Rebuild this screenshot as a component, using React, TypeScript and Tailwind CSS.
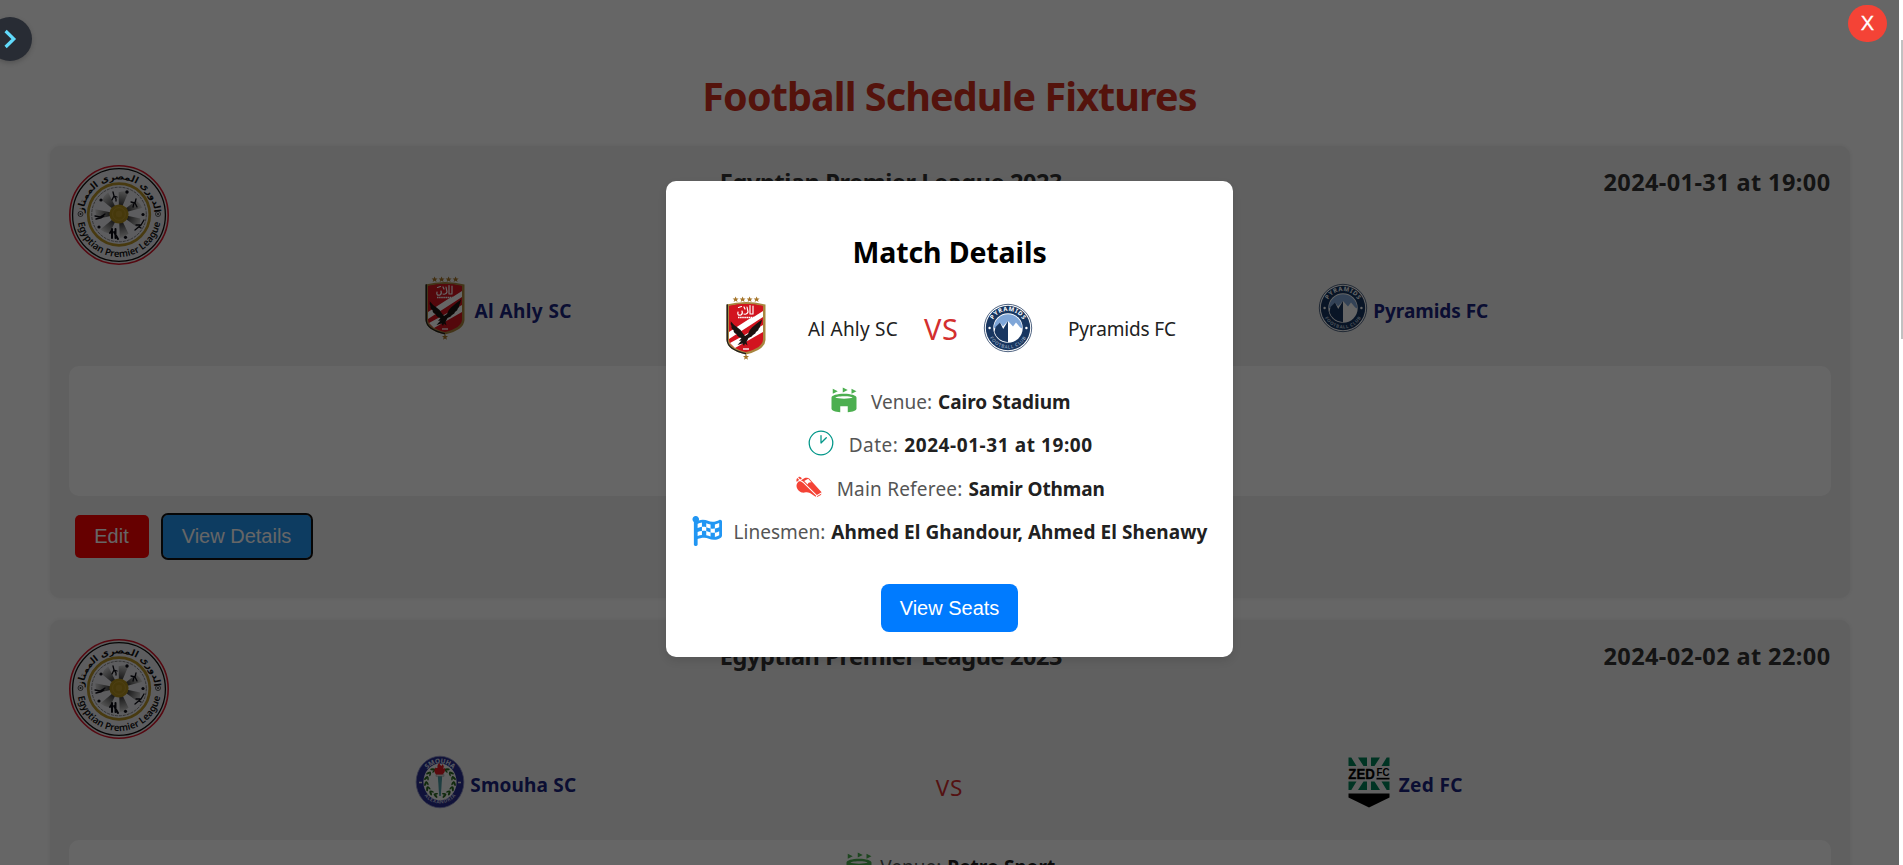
import type { ReactNode } from "react";
import { MdStadium } from "react-icons/md";
import { CiClock1 } from "react-icons/ci";
import { GiWhistle } from "react-icons/gi";
import { FaFlagCheckered } from "react-icons/fa";

function LeagueLogo({ id }: { id: string }) {
  const petals = [15, 67, 118, 170, 222, 273, 325];
  return (
    <svg viewBox="0 0 100 100" className="mr-[10px] size-[100px] shrink-0">
      <defs>
        <path id={`${id}-top`} d="M16.640 62.140A35.500 35.500 0 1 1 83.360 62.140" />
        <path id={`${id}-bottom`} d="M8 50a42 42 0 0 0 84 0" />
        <radialGradient id={`${id}-petal`} gradientUnits="userSpaceOnUse" cx="50" cy="49" r="25">
          <stop offset="0.3" stopColor="#333" />
          <stop offset="1" stopColor="#dedede" />
        </radialGradient>
      </defs>
      <circle cx="50" cy="50" r="49.2" fill="#e6e6e6" stroke="#d4142a" strokeWidth="1.6" />
      <circle cx="50" cy="50" r="46.4" fill="#e9e9ee" stroke="#111" strokeWidth="1.3" />
      <circle cx="50" cy="49.5" r="30.8" fill="#e9e9ee" stroke="#b4922a" strokeWidth="2.7" />
      <circle cx="50" cy="49.5" r="27.3" fill="none" stroke="#555" strokeWidth="0.7" strokeDasharray="3 1" />
      {petals.map((a) => (
        <path key={a} d="M50 49 44 28q5-3 9.500-3Z" fill={`url(#${id}-petal)`} transform={`rotate(${a} 50 49)`} />
      ))}
      <circle cx="50" cy="49" r="9.6" fill="#b08e1c" />
      <circle cx="50" cy="49" r="6.4" fill="none" stroke="#c4a238" strokeWidth="0.8" />
      <circle cx="50" cy="49" r="3.2" fill="#bb982c" />
      <g fill="#0c0c14">
        <circle cx="58" cy="27" r="1.7" />
        <circle cx="32" cy="35" r="1.6" />
        <circle cx="74" cy="49.5" r="1.6" />
        <circle cx="30" cy="62" r="1.6" />
        <circle cx="56.500" cy="72.300" r="1.6" />
      </g>
      <g fill="none" stroke="#0c0c14" strokeWidth="1.3" strokeLinecap="round">
        <path d="M44 27l1 4 3 1M45 31l-2 4M45 31l2 3 0 2M67 34l-1 4-4-1M66 38l2 4M65 38l-1 4M26 51l5 1 5-3M27 54l5-1 3-2M75 55l-3 5-6 5M71 60l-4 0M70 62l2 1" />
        <path d="M43 64v9M46.500 64v9M45 67l4 7M41 68l2-3" strokeWidth="2" />
      </g>
      <g fill="#e9e9ee" stroke="#333" strokeWidth="0.8">
        <circle cx="11.500" cy="49" r="2.500" />
        <circle cx="89" cy="49" r="2.500" />
      </g>
      <g fill="#333">
        <circle cx="11.500" cy="49" r="1" />
        <circle cx="89" cy="49" r="1" />
      </g>
      <text className="font-['DejaVu_Sans',sans-serif] text-[9.300px]" fill="#111" textAnchor="middle">
        <textPath href={`#${id}-top`} startOffset="50%">الدورى المصرى الممتاز</textPath>
      </text>
      <text className="font-['Noto_Sans',sans-serif] text-[9.500px] font-semibold" fill="#111" textAnchor="middle">
        <textPath href={`#${id}-bottom`} startOffset="50%">Egyptian Premier League</textPath>
      </text>
    </svg>
  );
}

const STAR = "M0-3 .9-.9 3-.9 1.300.5 2 2.700 0 1.400-2 2.700-1.300.5-3-.9-.9-.9Z";

function AhlyCrest() {
  return (
    <svg viewBox="0 0 50 64" className="h-16 w-[50px] shrink-0">
      <g fill="#a5752a">
        {[14.600, 21.600, 28.600, 35.600].map((x) => (
          <path key={x} d={STAR} transform={`translate(${x} 3.400)`} />
        ))}
        <path d={STAR} transform="translate(25 61)" />
      </g>
      <path d="M5.500 8.500Q25 3.500 44.500 8.500V44Q44 54 25 58.500 6 54 5.500 44Z" fill="#a8863f" />
      <path d="M5.500 8.500 7 8.200V45Q8 53 25 57v1.500Q6 54 5.500 44Z" fill="#222" />
      <path d="M8 10Q25 6 42 10V43.500Q41.500 52 25 56 8.500 52 8 43.500Z" fill="#d2141f" />
      <path d="M8 36 42 14V21L8 43ZM9 47 42 29V36L14 52Z" fill="#fff" />
      <path d="M8 10Q25 6 42 10V15L31 22 8 24Z" fill="#d2141f" />
      <g fill="none" stroke="#fff" strokeLinecap="round">
        <path d="M17 16q-1 4 3 3 2-1 1-4M23 18q3 1 4-2l-1-5M29 9.500v8M32 10v7.500M17.500 11.500l3-1M23 11l1 2M29 18h3" strokeWidth="1.2" />
        <path d="M17 21.500h16" strokeWidth="1.500" strokeDasharray="1.600 .5" strokeLinecap="butt" />
      </g>
      <path
        d="M9.500 25q3 4 7 6.500 4 2.500 5.500 6l2 2.500 3-2q1-4 4-6.500Q36 27 41 23.500q-.5 4-2 6 1 .5-1.500 3.500.5 1-2.500 3 0 1.500-3 3-1 2-4.500 3l-2 4 1 3.500-2.500-2-1 2.500-1.500-2.500-5 1.500 4-4.500-2.500.5 2.500-3q-4-1-5-4-3-1-3-4-2.500-1-2-4-1.500-2-.5-5Z"
        fill="#1b1210"
      />
      <path d="M22 53h6" stroke="#fff" strokeWidth="1.300" />
    </svg>
  );
}

function PyramidsCrest({ id }: { id: string }) {
  return (
    <svg viewBox="0 0 50 50" className="size-[50px] shrink-0">
      <defs>
        <path id={`${id}-t`} d="M8 25a17 17 0 0 1 34 0" />
        <path id={`${id}-b`} d="M4.500 25a20.500 20.500 0 0 0 41 0" />
      </defs>
      <circle cx="25" cy="25" r="23.700" fill="#fff" stroke="#3d5474" strokeWidth="0.9" />
      <circle cx="25" cy="25" r="22.200" fill="#183660" />
      <circle cx="25" cy="25" r="14.700" fill="#fff" />
      <path d="M10.800 25.500a14.200 14.200 0 0 1 28.400 0l-2-1-4.200-5-3 4-5-5.500-5 5.500-3-4-4.200 5Z" fill="#7fa6d8" />
      <path d="M25 18v21.200A14.200 14.200 0 0 1 11.500 29l1-5 4.500-4.500 3.200 6.500Z" fill="#183660" />
      <circle cx="6.600" cy="25" r="1.200" fill="#fff" />
      <circle cx="43.400" cy="25" r="1.200" fill="#fff" />
      <text className="font-['Noto_Sans',sans-serif] text-[6px] font-bold" fill="#fff" textAnchor="middle">
        <textPath href={`#${id}-t`} startOffset="50%" textLength="36">PYRAMIDS</textPath>
      </text>
      <text className="font-['Noto_Sans',sans-serif] text-[4.500px]" fill="#b9c6d8" textAnchor="middle">
        <textPath href={`#${id}-b`} startOffset="50%" textLength="44">FOOTBALL CLUB</textPath>
      </text>
    </svg>
  );
}

function SmouhaCrest() {
  const leaves = [20, 42, 64, 86, 108, 130, 152];
  return (
    <svg viewBox="0 0 50 54" className="h-[54px] w-[50px] shrink-0">
      <defs>
        <path id="smouha-t" d="M7.500 27a17.500 18.800 0 0 1 35 0" />
        <path id="smouha-b" d="M4.500 27a20.500 21.500 0 0 0 41 0" />
      </defs>
      <ellipse cx="25" cy="27" rx="23.900" ry="25.800" fill="#2a2f8e" stroke="#8b8fc0" strokeWidth="0.8" />
      <ellipse cx="25" cy="27" rx="16.600" ry="18.400" fill="#f4f4f4" />
      {leaves.map((a) => (
        <g key={a} fill="#2c6a22">
          <ellipse cx="25" cy="12.500" rx="1.100" ry="2.600" transform={`rotate(${a + 10} 25 27) rotate(60 25 12.500)`} />
          <ellipse cx="25" cy="14.500" rx="0.800" ry="2" transform={`rotate(${a + 10} 25 27) rotate(110 25 14.500)`} />
          <ellipse cx="25" cy="12.500" rx="1.100" ry="2.600" transform={`rotate(${-a - 10} 25 27) rotate(-60 25 12.500)`} />
          <ellipse cx="25" cy="14.500" rx="0.800" ry="2" transform={`rotate(${-a - 10} 25 27) rotate(-110 25 14.500)`} />
        </g>
      ))}
      <path d="M22.800 21h4.400L25.800 41h-1.600Z" fill="#4d9aa0" />
      <path d="M21 19.500h8v1.800h-8Z" fill="#ddd" stroke="#666" strokeWidth="0.3" />
      <path d="M21 19.500q-3-3.500-.5-7 1.500 1 2 0-.5-3 2-4.500 0 2 2 3 1-1 .5-2 3 2 1 4.500 1.500 0 2-.5.500 4-2.500 6.500Z" fill="#e01a24" />
      <path d="M4 27.500h3M43 27.500h3" stroke="#ddd" strokeWidth="1.500" />
      <text className="font-['Noto_Sans',sans-serif] text-[6.500px] font-bold" fill="#dfe0f0" textAnchor="middle">
        <textPath href="#smouha-t" startOffset="50%" textLength="29">SMOUHA</textPath>
      </text>
      <text className="font-['Noto_Sans',sans-serif] text-[5px]" fill="#b9bbdd" textAnchor="middle">
        <textPath href="#smouha-b" startOffset="50%" textLength="36">ALEXANDRIA</textPath>
      </text>
    </svg>
  );
}

function ZedCrest() {
  return (
    <svg viewBox="0 0 50 54" className="h-[54px] w-[50px] shrink-0">
      <g fill="#008359">
        <path d="M4.500 2.500h2.800L12.500 11H4.500ZM14 2.500h9V11h-3.500ZM27 2.500h9L30.500 11H27ZM42.700 2.500h2.800V11h-8Z" />
        <path d="M4.500 26.500h8L7.300 35H4.500ZM19.500 26.500H23V35h-9ZM27 26.500h3.500L36 35h-9ZM37.500 26.500h8V35h-2.800Z" />
      </g>
      <path d="M4.500 38.500h41v4L25 52.500 4.500 42.500Z" fill="#000" />
      <text x="4.300" y="24.300" textLength="26.500" lengthAdjust="spacingAndGlyphs" className="font-['Liberation_Sans',sans-serif] text-[15px] font-bold" fill="#000" stroke="#000" strokeWidth="0.3">ZED</text>
      <text x="32.500" y="21.300" textLength="13" lengthAdjust="spacingAndGlyphs" className="font-['Liberation_Sans',sans-serif] text-[11px] font-bold" fill="#000">FC</text>
      <path d="M32.500 22.800h13v1.700h-13Z" fill="#000" />
    </svg>
  );
}

type InfoRowProps = { icon: ReactNode; label: string; value: string; iconClass: string; labelClass: string; valueClass: string };

function InfoRow({ icon, label, value, iconClass, labelClass, valueClass }: InfoRowProps) {
  return (
    <div className="flex h-[43.6px] items-center justify-center text-[19px] whitespace-nowrap">
      <span className={`text-[30px] ${iconClass}`}>{icon}</span>
      <span className={`mr-[6px] pt-[2px] text-[#555] ${labelClass}`}>{label}</span>
      <span className={`pt-[2px] font-bold text-[#212121] ${valueClass}`}>{value}</span>
    </div>
  );
}

type Fixture = {
  id: string;
  date: string;
  home: string;
  away: string;
  homeLogo: ReactNode;
  awayLogo: ReactNode;
  homeClass: string;
  awayClass: string;
  venue: string;
  focused: boolean;
};

const fixtures: Fixture[] = [
  {
    id: "ahly-pyramids",
    date: "2024-01-31 at 19:00",
    home: "Al Ahly SC",
    away: "Pyramids FC",
    homeLogo: <AhlyCrest />,
    awayLogo: <PyramidsCrest id="pyr-card" />,
    homeClass: "tracking-[0.4px]",
    awayClass: "tracking-[-0.04px]",
    venue: "Cairo Stadium",
    focused: true,
  },
  {
    id: "smouha-zed",
    date: "2024-02-02 at 22:00",
    home: "Smouha SC",
    away: "Zed FC",
    homeLogo: <SmouhaCrest />,
    awayLogo: <ZedCrest />,
    homeClass: "tracking-[0.16px]",
    awayClass: "tracking-[0.36px]",
    venue: "Petro Sport",
    focused: false,
  },
];

function FixtureCard({ f }: { f: Fixture }) {
  return (
    <section className="mb-[22.5px] h-[451.5px] shrink-0 rounded-[10px] bg-[#f0f0f0] p-[19px] shadow-[0_0_5px_rgba(0,0,0,0.08)]">
      <header className="flex items-start justify-between text-[23.5px] leading-[33px] font-bold text-[#333]">
        <LeagueLogo id={f.id} />
        <h2 className="pt-px tracking-[-0.4px]">Egyptian Premier League 2023</h2>
        <time className="pt-px tracking-[0.4px]">{f.date}</time>
      </header>
      <div className="mb-[15px] grid h-[86px] grid-cols-[1fr_53px_1fr] items-center text-[19px] font-bold text-[#1a237e]">
        <div className="flex items-center justify-center gap-[5px]">
          {f.homeLogo}
          <span className={`pt-[6px] ${f.homeClass}`}>{f.home}</span>
        </div>
        <span className="mt-[11px] text-center text-[22.5px] font-normal tracking-[0.8px] text-[#d32f2f]">VS</span>
        <div className="flex items-center justify-center gap-[5px]">
          {f.awayLogo}
          <span className={`pt-[6px] ${f.awayClass}`}>{f.away}</span>
        </div>
      </div>
      <div className="mb-[19px] h-[130px] rounded-[10px] bg-white pt-[4px]">
        <InfoRow icon={<MdStadium className="text-[#4caf50]" />} label="Venue:" value={f.venue} iconClass="-mt-px mr-[6.5px]" labelClass="" valueClass="tracking-[0.05px]" />
      </div>
      <div className="flex gap-[14px] pl-[6px] font-['Liberation_Sans',Arial,sans-serif] text-[20px] leading-[23px] text-white">
        <button className="h-[43px] w-[74px] rounded-[5px] bg-[#ff0000]">Edit</button>
        <button className={f.focused ? "h-[43px] w-[148px] rounded-[5px] bg-[#2196f3] outline-2 outline-[#101010]" : "h-[43px] w-[148px] rounded-[5px] bg-[#2196f3]"}>View Details</button>
      </div>
    </section>
  );
}

function MatchModal() {
  return (
    <div className="flex h-[476px] w-[567px] flex-col items-center rounded-[10px] bg-white pt-[51px] shadow-[0_4px_8px_rgba(0,0,0,0.1)]">
      <h2 className="text-[28.5px] leading-10 font-bold tracking-[-0.11px] text-black">Match Details</h2>
      <div className="mt-6 flex h-16 w-full items-center pl-[55px] text-[19px] whitespace-nowrap text-[#212121]">
        <AhlyCrest />
        <span className="ml-[37px] w-[116px] pt-[2px] tracking-[0.2px]">Al Ahly SC</span>
        <span className="w-[59px] pt-px text-[29px] tracking-[0.6px] text-[#d32f2f]">VS</span>
        <PyramidsCrest id="pyr-modal" />
        <span className="ml-[35px] pt-[2px] tracking-[-0.16px]">Pyramids FC</span>
      </div>
      <div className="mt-[19px]">
        <InfoRow icon={<MdStadium className="text-[#4caf50]" />} label="Venue:" value="Cairo Stadium" iconClass="-mt-px mr-[12.5px]" labelClass="" valueClass="tracking-[-0.03px]" />
        <InfoRow icon={<CiClock1 className="text-[#009688]" />} label="Date:" value="2024-01-31 at 19:00" iconClass="-mt-[3px] mr-[12.5px]" labelClass="tracking-[0.45px]" valueClass="tracking-[0.58px]" />
        <InfoRow icon={<GiWhistle className="text-[#f44336]" />} label="Main Referee:" value="Samir Othman" iconClass="-mt-px mr-[12.5px]" labelClass="tracking-[0.2px]" valueClass="tracking-[-0.09px]" />
        <InfoRow icon={<FaFlagCheckered className="text-[#2196f3]" />} label="Linesmen:" value="Ahmed El Ghandour, Ahmed El Shenawy" iconClass="-mt-px mr-[12px]" labelClass="" valueClass="tracking-[0.06px]" />
      </div>
      <button className="mt-[31px] h-12 w-[137px] rounded-[8px] bg-[#007bff] pb-px font-['Liberation_Sans',Arial,sans-serif] text-[20px] text-white">View Seats</button>
    </div>
  );
}

export default function App() {
  return (
    <div className="relative flex h-[865px] w-full overflow-hidden bg-white font-['Noto_Sans','Open_Sans',sans-serif]">
      <main className="flex h-full flex-1 flex-col overflow-hidden px-[49.5px] pt-[66px]">
        <h1 className="mb-5 text-center text-[39.5px] leading-[60px] font-bold tracking-[-0.9px] text-[#d3301f]">Football Schedule Fixtures</h1>
        {fixtures.map((f) => (
          <FixtureCard key={f.id} f={f} />
        ))}
      </main>
      <div className="h-full w-[4px] shrink-0 bg-white pt-10 pl-[2px]">
        <div className="h-[299px] bg-[#c1c1c1]" />
      </div>

      <div className="absolute inset-y-0 right-[4px] left-0 flex items-start justify-center bg-black/60 pt-[181px]">
        <MatchModal />
        <button className="absolute top-[5px] right-[12px] h-[37px] w-[39px] rounded-full bg-[#f44336] pb-[2px] font-['Liberation_Sans',Arial,sans-serif] text-[20px] text-white [-webkit-text-stroke:0.3px_white]">X</button>
      </div>
      <button className="absolute top-[17px] left-[-12px] flex size-11 items-center justify-center rounded-full bg-[#282c34] shadow-[0_2px_5px_rgba(0,0,0,0.2)]">
        <svg viewBox="0 0 44 44" className="size-11" fill="none" stroke="#61dafb" strokeWidth="3.200">
          <path d="M17.600 14l8.200 8-8.200 8" />
        </svg>
      </button>
    </div>
  );
}
